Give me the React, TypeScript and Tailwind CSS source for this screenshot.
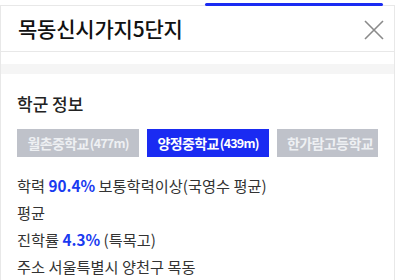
import React from "react";

const schools = [
  { name: "월촌중학교", dist: "(477m)", active: false },
  { name: "양정중학교", dist: "(439m)", active: true },
  { name: "한가람고등학교", dist: "", active: false },
];

export default function App() {
  return (
    <div
      className="relative w-[395px] h-[280px] overflow-hidden bg-white text-[#222]"
      style={{ fontFamily: '"Noto Sans CJK KR", "Noto Sans", sans-serif' }}
    >
      <div className="absolute left-[205px] top-[3px] h-[3px] w-[178px] rounded-full bg-[#1a2bf2]" />
      <div className="mt-[5px] h-[275px] border-l border-r border-t border-[#e8e8e8]">
        <div className="flex h-[46px] items-center justify-between border-b border-[#e8e8e8] pl-[17px] pr-[10px]">
          <h1 className="text-[21px] font-medium leading-none tracking-[-0.2px] text-[#111]">목동신시가지5단지</h1>
          <svg width="20" height="20" viewBox="0 0 20 20" className="mt-[3px]">
            <path d="M1 1 L19 19 M19 1 L1 19" stroke="#8a8a8a" strokeWidth="1.6" fill="none" />
          </svg>
        </div>
        <div className="mt-[12px] h-[10px] bg-[#f5f5f5]" />
        <div className="px-[16px] pt-[19px]">
          <h2 className="text-[17px] font-medium leading-[22px] text-[#222]">학군 정보</h2>
          <div className="mt-[14px] flex w-[361px] gap-[8px] overflow-hidden">
            {schools.map((s, i) => (
              <div
                key={s.name}
                className={`flex h-[28px] shrink-0 items-center whitespace-nowrap font-bold ${
                  i < 2 ? "w-[122px] justify-center" : "w-[110px] overflow-hidden pl-[10px]"
                } ${s.active ? "bg-[#1a2bf2] text-white" : "bg-[#bfc2ca] text-[#eef0f3]"}`}
              >
                <span className="text-[14px] tracking-[-0.6px]">{s.name}</span>
                {s.dist && <span className="ml-[1px] text-[12.5px] tracking-[-0.8px]">{s.dist}</span>}
              </div>
            ))}
          </div>
          <div className="mt-[15px] flex flex-col text-[15.25px] leading-[27px] text-[#333]">
            <p>
              학력 <span className="font-semibold text-[#1a3af0]">90.4%</span> 보통학력이상(국영수 평균)
            </p>
            <p>평균</p>
            <p>
              진학률 <span className="font-semibold text-[#1a3af0]">4.3%</span> (특목고)
            </p>
            <p>주소 서울특별시 양천구 목동</p>
          </div>
        </div>
      </div>
    </div>
  );
}
